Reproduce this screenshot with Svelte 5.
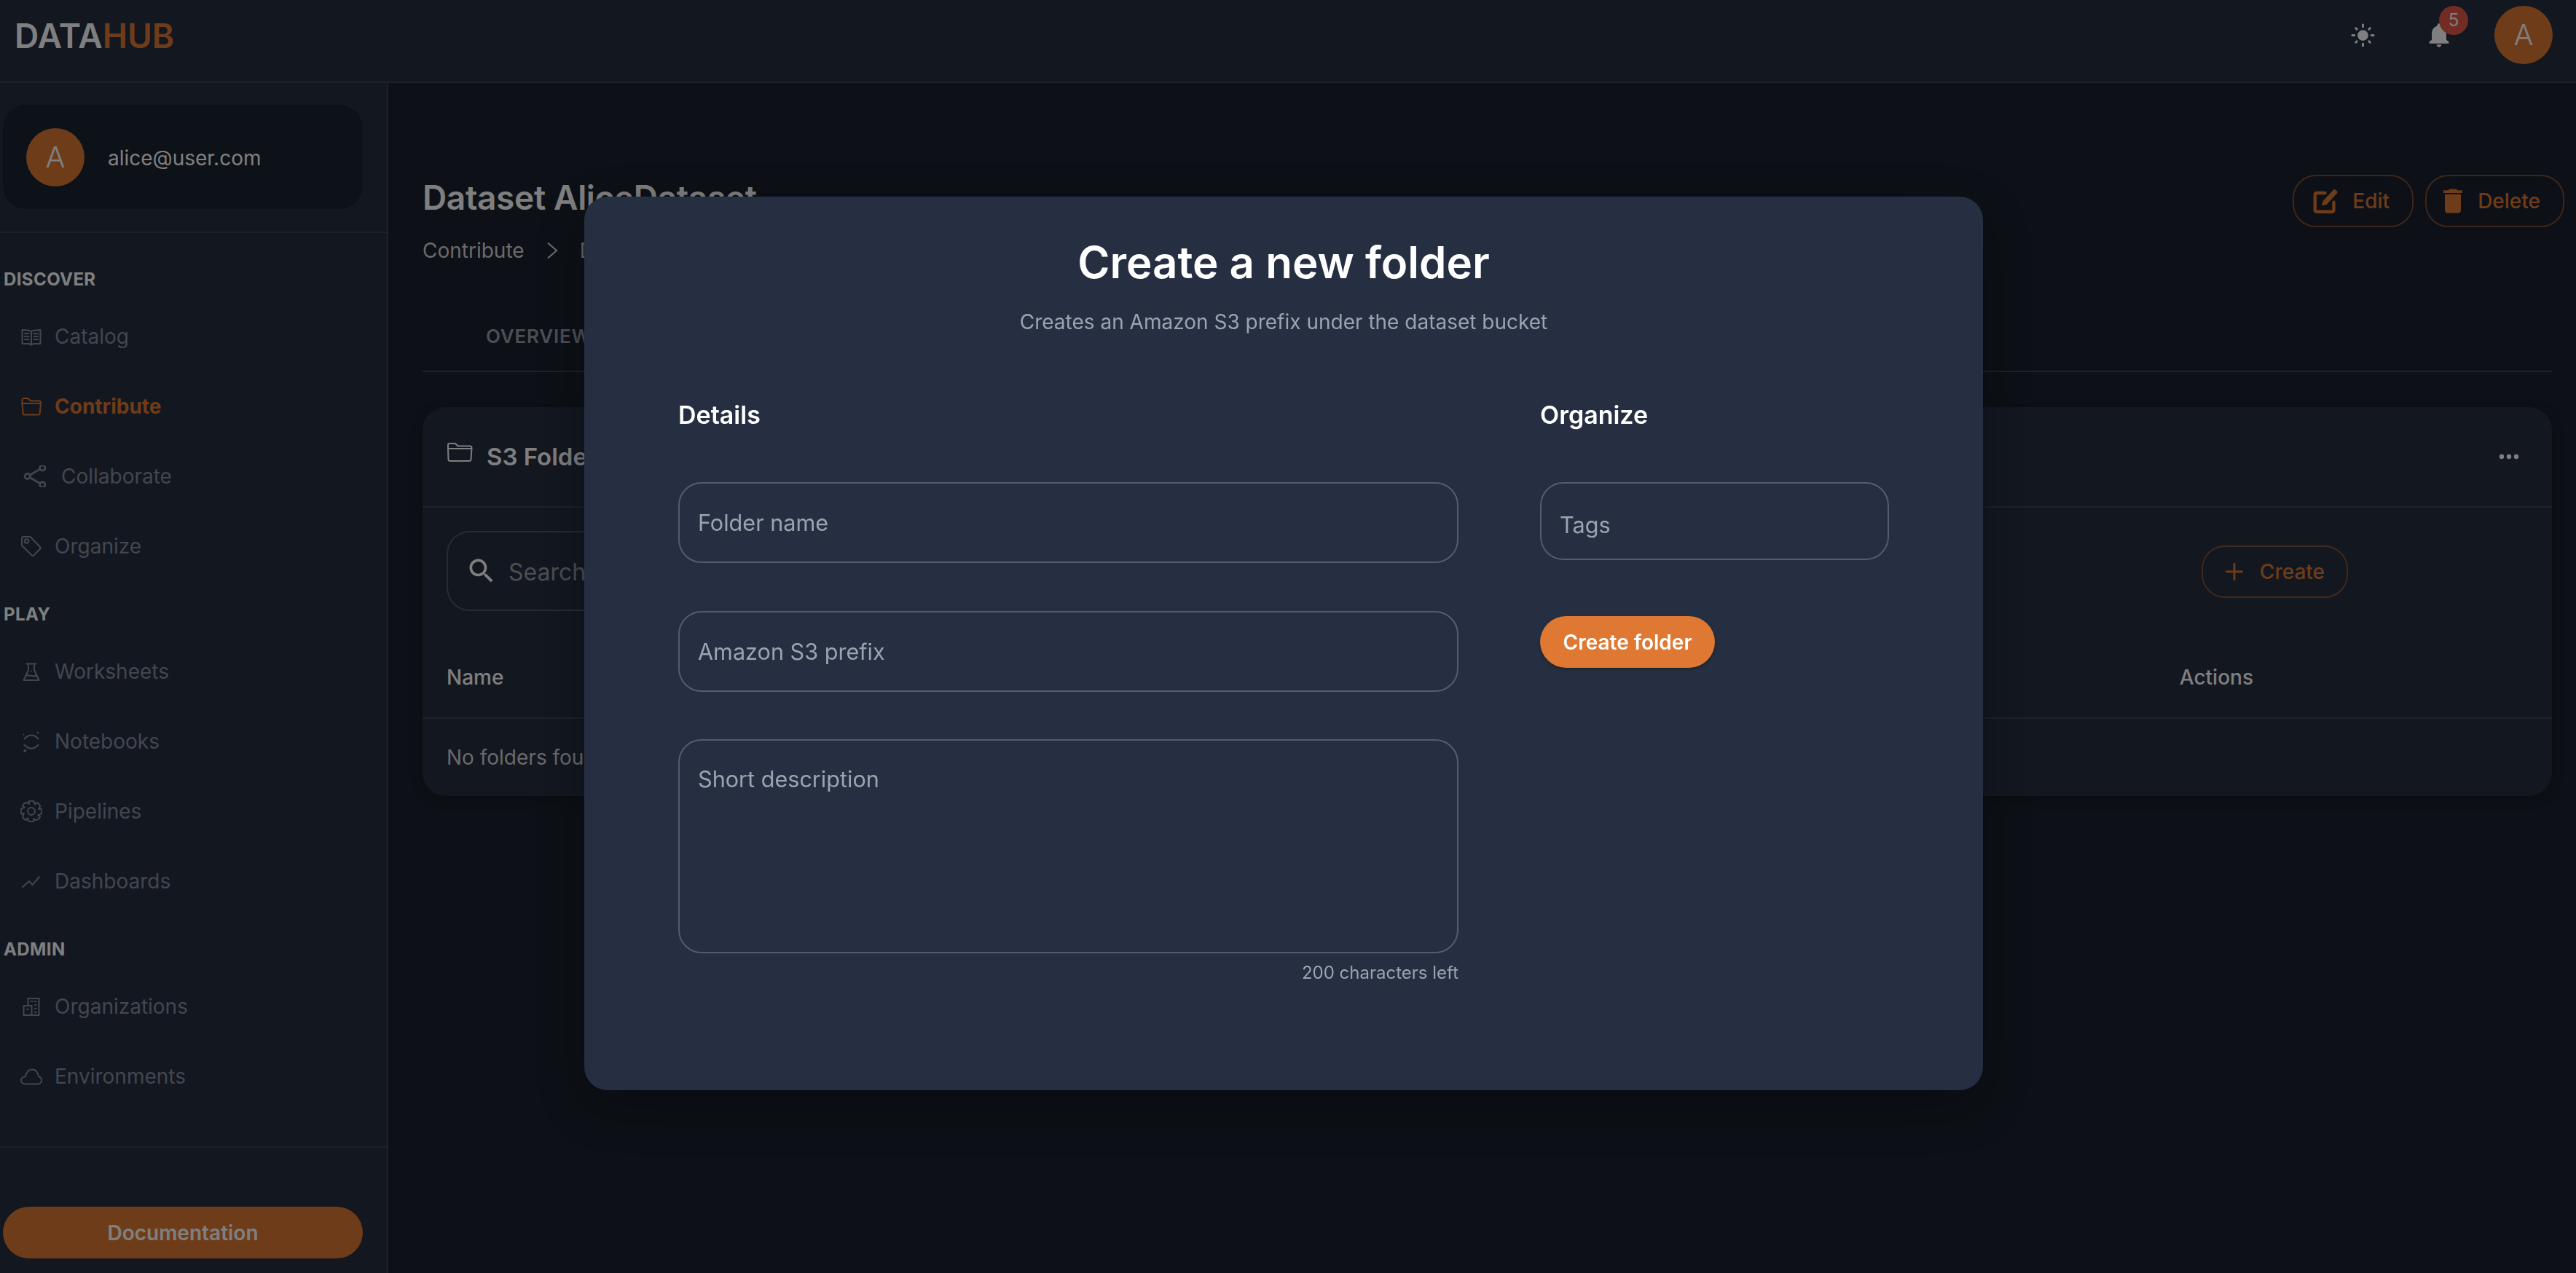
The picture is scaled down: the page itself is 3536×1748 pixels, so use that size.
<script>
  const discover = [
    { id: 'catalog', label: 'Catalog' },
    { id: 'contribute', label: 'Contribute', active: true },
    { id: 'collaborate', label: 'Collaborate', wide: true },
    { id: 'organize', label: 'Organize' },
  ];
  const play = [
    { id: 'worksheets', label: 'Worksheets' },
    { id: 'notebooks', label: 'Notebooks' },
    { id: 'pipelines', label: 'Pipelines' },
    { id: 'dashboards', label: 'Dashboards' },
  ];
  const admin = [
    { id: 'organizations', label: 'Organizations' },
    { id: 'environments', label: 'Environments' },
  ];
  const sections = [
    { title: 'DISCOVER', items: discover },
    { title: 'PLAY', items: play },
    { title: 'ADMIN', items: admin },
  ];

  // eight-lobed outline for the pipelines cog
  function gearPoints() {
    const pts = [];
    for (let i = 0; i < 8; i++) {
      const a = (i * Math.PI) / 4;
      for (const [off, r] of [[-0.26, 14], [0.0, 14.6], [0.26, 14], [0.5, 10.6]]) {
        pts.push(`${(15 + r * Math.cos(a + off)).toFixed(2)},${(15 + r * Math.sin(a + off)).toFixed(2)}`);
      }
    }
    return pts.join(' ');
  }
</script>

{#snippet navIcon(id)}
  {#if id === 'catalog'}
    <svg class="ni" viewBox="0 0 30 30">
      <path d="M15 8C12 6.5 6 6 2.5 6v19H12l3 1.5 3-1.5h9.500V6C24 6 18 6.500 15 8v17" />
      <path d="M6 11h5.500M6 15h5.500M6 19h5.500M18.500 11H24M18.500 15H24M18.500 19H24" />
    </svg>
  {:else if id === 'contribute'}
    <svg class="ni" viewBox="0 0 30 30">
      <path d="M2.500 12V6a2 2 0 0 1 2-2h6l3.500 3.500h11.500a2.500 2.500 0 0 1 2.500 2.500l-1.200 14a2.500 2.500 0 0 1-2.500 2.500H6a2.500 2.500 0 0 1-2.500-2.500L2.500 11h25" />
    </svg>
  {:else if id === 'collaborate'}
    <svg class="ni wide" viewBox="0 0 35 30">
      <circle cx="9.700" cy="15" r="3.700" /><circle cx="30.300" cy="3.500" r="3.700" /><circle cx="30.300" cy="26.500" r="3.700" />
      <path d="M13 13.200 27 5.300M13 16.800l14 7.900" />
    </svg>
  {:else if id === 'organize'}
    <svg class="ni" viewBox="0 0 30 30">
      <path d="M2 4a2 2 0 0 1 2-2h9.500l13.500 14a2 2 0 0 1 0 2.500l-8.500 9a2 2 0 0 1-2.800 0L2 14z" />
      <circle cx="8.500" cy="8" r="2.800" />
    </svg>
  {:else if id === 'worksheets'}
    <svg class="ni" viewBox="0 0 30 30">
      <path d="M8.500 4.500h13M11 4.500v8.500L4.500 27h21L19 13V4.500" />
      <path d="M7.500 21c4-3 8 2.500 14-.500" />
      <circle class="dot" cx="15" cy="14.500" r="1" />
    </svg>
  {:else if id === 'notebooks'}
    <svg class="ni" viewBox="0 0 30 30">
      <path d="M5.500 11.500Q15 1.500 24.500 11.500M5.500 20Q15 29.500 24.500 20" />
      <circle class="dot" cx="4.500" cy="5.500" r="1" /><circle class="dot" cx="24" cy="3" r="1.300" /><circle class="dot" cx="6.300" cy="28" r="2" />
    </svg>
  {:else if id === 'pipelines'}
    <svg class="ni" viewBox="0 0 30 30">
      <polygon points={gearPoints()} />
      <circle cx="15" cy="15" r="5" />
    </svg>
  {:else if id === 'dashboards'}
    <svg class="ni" viewBox="0 0 30 30"><path d="M3 23l9-8 4.500 5L26 9" /></svg>
  {:else if id === 'organizations'}
    <svg class="ni" viewBox="0 0 30 30">
      <path d="M10.500 14V4h15v23h-21V14h11v13" />
      <path d="M15 8h1.500M20 8h1.500M20 13h1.500M20 18h1.500M20 23h1.500M9 19h1.500" />
    </svg>
  {:else if id === 'environments'}
    <svg class="ni" viewBox="0 0 30 30">
      <path d="M7 25.500C3.500 25.500 1 23.500 1 20.500S3.500 15.500 6.500 15.500C8 10 11.500 5.500 16 5.500c5 0 8.500 4.500 9 10 2.500.3 4 2.500 4 5s-2 5-5 5z" />
    </svg>
  {/if}
{/snippet}

<div class="shell">
  <header class="topbar">
    <div class="logo">DATA<span>HUB</span></div>
    <div class="top-actions">
      <svg class="sun" viewBox="0 0 24 24"><path d="M12 7c-2.760 0-5 2.240-5 5s2.240 5 5 5 5-2.240 5-5-2.240-5-5-5zM2 13h2c.55 0 1-.45 1-1s-.45-1-1-1H2c-.55 0-1 .45-1 1s.45 1 1 1zm18 0h2c.55 0 1-.45 1-1s-.45-1-1-1h-2c-.55 0-1 .45-1 1s.45 1 1 1zM11 2v2c0 .55.45 1 1 1s1-.45 1-1V2c0-.55-.45-1-1-1s-1 .45-1 1zm0 18v2c0 .55.45 1 1 1s1-.45 1-1v-2c0-.55-.45-1-1-1s-1 .45-1 1zM5.990 4.580c-.39-.39-1.030-.39-1.410 0-.39.39-.39 1.030 0 1.410l1.060 1.060c.39.39 1.030.39 1.410 0s.39-1.030 0-1.410L5.990 4.580zm12.370 12.370c-.39-.39-1.030-.39-1.410 0-.39.39-.39 1.030 0 1.410l1.060 1.060c.39.39 1.030.39 1.410 0 .39-.39.39-1.030 0-1.410l-1.060-1.060zm1.060-10.960c.39-.39.39-1.030 0-1.410-.39-.39-1.030-.39-1.410 0l-1.060 1.060c-.39.39-.39 1.030 0 1.410s1.030.39 1.410 0l1.060-1.060zM7.050 18.360c.39-.39.39-1.030 0-1.410-.39-.39-1.030-.39-1.410 0l-1.060 1.060c-.39.39-.39 1.030 0 1.410s1.030.39 1.410 0l1.060-1.060z" /></svg>
      <div class="bell-wrap">
        <svg class="bell" viewBox="0 0 24 24"><path d="M12 22c1.100 0 2-.9 2-2h-4c0 1.100.89 2 2 2zm6-6v-5c0-3.070-1.640-5.640-4.500-6.320V4c0-.83-.67-1.500-1.500-1.500s-1.500.67-1.500 1.500v.68C7.630 5.360 6 7.920 6 11v5l-2 1.500V19h16v-1.500l-2-1.500z" /></svg>
        <span class="badge">5</span>
      </div>
      <div class="avatar big">A</div>
    </div>
  </header>

  <div class="body">
    <aside class="sidebar">
      <div class="user-block">
        <div class="user-card">
          <div class="avatar">A</div>
          <span>alice@user.com</span>
        </div>
      </div>

      <nav>
        {#each sections as section}
          <div class="section-title">{section.title}</div>
          {#each section.items as item}
            <div class="nav-item" class:active={item.active}>
              {@render navIcon(item.id)}
              <span>{item.label}</span>
            </div>
          {/each}
        {/each}
      </nav>

      <div class="side-footer">
        <button class="doc-btn">Documentation</button>
      </div>
    </aside>

    <main>
      <div class="page-head">
        <div>
          <h1>Dataset AliceDataset</h1>
          <div class="crumbs">
            <span>Contribute</span>
            <svg viewBox="0 0 16 16"><path d="M4 1l8 7-8 7" /></svg>
            <span>Datasets</span>
          </div>
        </div>
        <div class="head-actions">
          <button class="outline edit">
            <svg viewBox="0 0 32 32">
              <path class="s" d="M15 5.500H4.500a2 2 0 0 0-2 2V27a2 2 0 0 0 2 2H24a2 2 0 0 0 2-2V17" />
              <path class="f" d="M25.500 1.500a2.200 2.200 0 0 1 3 0l1.500 1.500a2.200 2.200 0 0 1 0 3L17 20l-6 1.500 1.500-6z" />
            </svg>
            Edit
          </button>
          <button class="outline del">
            <svg viewBox="0 0 24 24"><path class="f" d="M6 19c0 1.100.9 2 2 2h8c1.100 0 2-.9 2-2V7H6v12zM19 4h-3.500l-1-1h-5l-1 1H5v2h14V4z" /></svg>
            Delete
          </button>
        </div>
      </div>

      <div class="tabs"><span>OVERVIEW</span></div>

      <section class="card">
        <div class="card-head">
          <div class="card-title">
            <svg viewBox="0 0 36 30"><path d="M2 10V5a2 2 0 0 1 2-2h8l3.500 3.500H32a2.500 2.500 0 0 1 2.500 2.500l-1 15.500a2.500 2.500 0 0 1-2.500 2.500H5a2.500 2.500 0 0 1-2.500-2.500L2 10h32" /></svg>
            <span>S3 Folders</span>
          </div>
          <svg class="dots" viewBox="0 0 28 8"><circle cx="4" cy="4" r="3.200" /><circle cx="14" cy="4" r="3.200" /><circle cx="24" cy="4" r="3.200" /></svg>
        </div>
        <div class="toolbar">
          <div class="search">
            <svg viewBox="0 0 24 24"><path d="M15.500 14h-.79l-.28-.27C15.410 12.590 16 11.110 16 9.500 16 5.910 13.090 3 9.500 3S3 5.910 3 9.500 5.910 16 9.500 16c1.610 0 3.090-.59 4.230-1.570l.27.28v.79l5 4.990L20.490 19l-4.990-5zm-6 0C7.010 14 5 11.990 5 9.500S7.010 5 9.500 5 14 7.010 14 9.500 11.990 14 9.500 14z" /></svg>
            <span>Search</span>
          </div>
          <button class="outline create">
            <svg viewBox="0 0 24 24"><path class="s" d="M12 4v16M4 12h16" /></svg>
            Create
          </button>
        </div>
        <div class="table-head"><span>Name</span><span>Actions</span></div>
        <div class="table-row">No folders found</div>
      </section>
    </main>
  </div>

  <div class="backdrop">
    <div class="dialog" role="dialog">
      <h2>Create a new folder</h2>
      <p class="sub">Creates an Amazon S3 prefix under the dataset bucket</p>
      <div class="form">
        <div class="col">
          <h3>Details</h3>
          <input placeholder="Folder name" />
          <input placeholder="Amazon S3 prefix" />
          <textarea placeholder="Short description"></textarea>
          <div class="counter">200 characters left</div>
        </div>
        <div class="col">
          <h3>Organize</h3>
          <input class="tags" placeholder="Tags" />
          <button class="submit">Create folder</button>
        </div>
      </div>
    </div>
  </div>
</div>

<style>
  :global(body) {
    margin: 0;
    background: #1a222e;
    font-family: Inter, "Liberation Sans", sans-serif;
  }

  .shell {
    width: 3536px;
    height: 1748px;
    overflow: hidden;
    display: flex;
    flex-direction: column;
    background: #1a222e;
    color: #fff;
  }

  .topbar {
    height: 112px;
    flex: none;
    display: flex;
    align-items: flex-start;
    justify-content: space-between;
    background: #262f41;
    border-bottom: 2px solid #3b4454;
  }

  .logo {
    margin: 24px 0 0 20px;
    font-size: 46px;
    line-height: 50px;
    font-weight: 600;
    color: #fff;
  }

  .logo span {
    color: #de7832;
  }

  .top-actions {
    display: flex;
    align-items: flex-start;
    padding: 8px 32px 0 0;
  }

  .sun {
    width: 35px;
    height: 35px;
    margin-top: 23px;
    fill: #fff;
  }

  .bell-wrap {
    position: relative;
    width: 40px;
    height: 40px;
    margin: 20px 56px 0 67px;
  }

  .bell {
    width: 40px;
    height: 40px;
    fill: #fff;
  }

  .badge {
    position: absolute;
    left: 20px;
    top: -20px;
    width: 40px;
    height: 40px;
    border-radius: 50%;
    background: #e55848;
    font-size: 24px;
    line-height: 40px;
    text-align: center;
  }

  .avatar {
    width: 80px;
    height: 80px;
    flex: none;
    border-radius: 50%;
    background: #de7832;
    color: #fff;
    font-size: 40px;
    font-weight: 300;
    line-height: 80px;
    text-align: center;
  }

  .body {
    flex: 1;
    display: flex;
    min-height: 0;
  }

  .sidebar {
    width: 531px;
    flex: none;
    display: flex;
    flex-direction: column;
    background: #262f41;
    border-right: 2px solid #3b4454;
  }

  .user-block {
    height: 206px;
    box-sizing: border-box;
    padding: 30px 33px 0 4px;
    border-bottom: 2px solid #3b4454;
  }

  .user-card {
    height: 143px;
    display: flex;
    align-items: center;
    gap: 32px;
    padding-left: 32px;
    border-radius: 32px;
    background: #1a2230;
    font-size: 28px;
  }

  .user-card span {
    padding-top: 3px;
  }

  nav {
    flex: 1;
  }

  .section-title {
    height: 60px;
    margin-top: 16px;
    padding-left: 5px;
    font-size: 24px;
    font-weight: 700;
    line-height: 60px;
    letter-spacing: 0.4px;
  }

  nav .section-title:first-child {
    margin-top: 34px;
  }

  .nav-item {
    height: 96px;
    display: flex;
    align-items: center;
    gap: 17px;
    padding-left: 28px;
    color: #848e9e;
    font-size: 28px;
  }

  .nav-item.active {
    color: #de7832;
    font-weight: 700;
  }

  .ni {
    width: 30px;
    height: 30px;
    flex: none;
    fill: none;
    stroke: currentColor;
    stroke-width: 2;
    stroke-linejoin: round;
    stroke-linecap: round;
  }

  .ni.wide {
    width: 35px;
    margin-right: 4px;
    stroke-width: 2.700;
  }

  .ni .dot {
    fill: currentColor;
    stroke: none;
  }

  .side-footer {
    height: 174px;
    box-sizing: border-box;
    padding: 81px 33px 0 4px;
    border-top: 2px solid #3b4454;
  }

  .doc-btn {
    width: 100%;
    height: 71px;
    border: none;
    border-radius: 36px;
    background: #de7832;
    color: #fff;
    font: 600 28px Inter, sans-serif;
  }

  main {
    flex: 1;
    min-width: 0;
    padding: 127px 33px 0 47px;
  }

  .page-head {
    display: flex;
    justify-content: space-between;
    align-items: flex-start;
  }

  h1 {
    margin: 0;
    font-size: 46px;
    line-height: 60px;
    font-weight: 600;
    letter-spacing: -0.35px;
  }

  .crumbs {
    display: flex;
    align-items: center;
    gap: 26px;
    margin-top: 23px;
    height: 40px;
    color: #d4d4d4;
    font-size: 28px;
  }

  .crumbs svg {
    width: 24px;
    height: 24px;
    fill: none;
    stroke: #d4d4d4;
    stroke-width: 1.500;
  }

  .head-actions {
    display: flex;
    gap: 16px;
    margin: -1px -17px 0 0;
  }

  .outline {
    height: 72px;
    box-sizing: border-box;
    display: flex;
    align-items: center;
    gap: 22px;
    padding: 0 30px 0 26px;
    border: 2px solid rgba(222, 120, 50, 0.5);
    border-radius: 32px;
    background: none;
    color: #de7832;
    font: 500 28px Inter, sans-serif;
  }

  .outline svg {
    width: 32px;
    height: 32px;
  }

  .outline.edit {
    gap: 19px;
    padding-right: 31px;
  }

  .outline.edit svg {
    width: 35px;
    height: 35px;
  }

  .outline.del svg {
    width: 44px;
    height: 44px;
  }

  .outline.del {
    gap: 12px;
    padding: 0 31px 0 14px;
  }

  .outline .f {
    fill: #de7832;
  }

  .outline .s {
    fill: none;
    stroke: #de7832;
    stroke-width: 4;
    stroke-linecap: round;
    stroke-linejoin: round;
  }

  .tabs {
    height: 96px;
    margin-top: 49px;
    padding-left: 87px;
    border-bottom: 2px solid #3b4454;
    color: #989ca8;
    font-size: 26px;
    font-weight: 600;
    line-height: 98px;
    letter-spacing: 0.8px;
  }

  .card {
    height: 534px;
    margin-top: 48px;
    border-radius: 32px;
    background: #262f41;
    box-shadow: 0 4px 16px rgba(0, 0, 0, 0.25);
  }

  .card-head {
    height: 136px;
    display: flex;
    align-items: center;
    justify-content: space-between;
    padding: 0 45px 0 33px;
    border-bottom: 2px solid #3b4454;
  }

  .card-title {
    display: flex;
    align-items: center;
    gap: 19px;
    font-size: 33px;
    font-weight: 600;
  }

  .card-title svg {
    width: 36px;
    height: 30px;
    margin-top: -12px;
    fill: none;
    stroke: #fff;
    stroke-width: 2;
  }

  .dots {
    width: 28px;
    height: 8px;
    fill: #fff;
  }

  .toolbar {
    height: 182px;
    box-sizing: border-box;
    display: flex;
    align-items: flex-start;
    justify-content: space-between;
    padding: 32px 280px 0 33px;
  }

  .search {
    width: 1000px;
    height: 110px;
    box-sizing: border-box;
    display: flex;
    align-items: center;
    gap: 15px;
    padding-left: 24px;
    border: 2px solid #4e5768;
    border-radius: 32px;
    color: #989ca8;
    font-size: 32px;
  }

  .search span {
    padding-top: 3px;
  }

  .search svg {
    width: 44px;
    height: 44px;
    fill: #fff;
  }

  .outline.create {
    margin-top: 20px;
    gap: 19px;
    padding: 0 30px 0 27px;
  }

  .create .s {
    stroke-width: 2.200;
  }

  .table-head {
    height: 108px;
    box-sizing: border-box;
    display: flex;
    justify-content: space-between;
    align-items: center;
    padding: 0 410px 5px 33px;
    border-bottom: 2px solid #3b4454;
    font-size: 28px;
    font-weight: 500;
    color: #fff;
  }

  .table-row {
    padding: 33px 33px 0;
    line-height: 40px;
    font-size: 28px;
    color: #d4d4d4;
  }

  .backdrop {
    position: fixed;
    inset: 0;
    background: rgba(0, 0, 0, 0.5);
  }

  .dialog {
    position: absolute;
    left: 802px;
    top: 270px;
    width: 1920px;
    height: 1227px;
    box-sizing: border-box;
    padding: 54px 129px 0;
    border-radius: 32px;
    background: #262f41;
    box-shadow: 0 22px 70px rgba(0, 0, 0, 0.35);
    text-align: center;
  }

  h2 {
    margin: 0;
    font-size: 60px;
    line-height: 72px;
    font-weight: 600;
  }

  .sub {
    margin: 28px 0 0;
    color: #9ca3af;
    font-size: 28px;
    line-height: 36px;
  }

  .form {
    display: grid;
    grid-template-columns: 1071px 479px;
    gap: 112px;
    margin-top: 88px;
    text-align: left;
  }

  .col {
    display: flex;
    flex-direction: column;
    align-items: stretch;
  }

  h3 {
    margin: 0 0 70px;
    font-size: 34px;
    line-height: 44px;
    font-weight: 600;
  }

  input,
  textarea {
    box-sizing: border-box;
    width: 100%;
    height: 111px;
    margin: 0 0 65.5px;
    padding: 0 25px;
    border: 2px solid #545d6e;
    border-radius: 32px;
    outline: none;
    background: none;
    color: #fff;
    font: 400 30.6px Inter, sans-serif;
    resize: none;
    display: block;
  }

  input::placeholder,
  textarea::placeholder {
    color: #9ca3af;
    opacity: 1;
  }

  textarea {
    height: 294px;
    margin-bottom: 0;
    padding-top: 32px;
    line-height: 42px;
  }

  .tags {
    height: 107px;
    margin-bottom: 77px;
    padding-top: 9px;
  }

  .counter {
    margin-top: 11px;
    color: #9ca3af;
    font-size: 24px;
    line-height: 32px;
    text-align: right;
  }

  .submit {
    align-self: flex-start;
    width: 240px;
    height: 71px;
    border: none;
    border-radius: 36px;
    background: #de7832;
    color: #fff;
    font: 600 28px Inter, sans-serif;
    box-shadow: 0 2px 4px rgba(0, 0, 0, 0.3);
  }
</style>
